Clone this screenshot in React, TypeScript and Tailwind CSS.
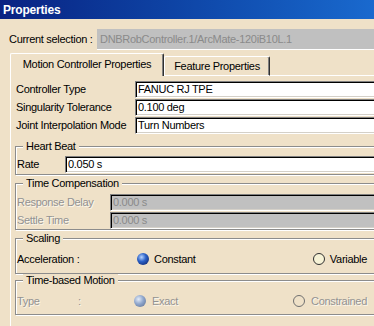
import React from "react";

const BG = "bg-[#efe1c8]";

function Field({ value, disabled }: { value: string; disabled?: boolean }) {
  return (
    <div
      className={`flex-1 h-[17px] flex items-center pl-[2px] whitespace-nowrap overflow-hidden border border-[#808080] border-b-white border-r-white shadow-[inset_1px_1px_0_#000,inset_-1px_-1px_0_#d4d0c8] ${
        disabled ? "bg-[#c0c0c0] text-[#8a8a8a]" : "bg-white text-black"
      }`}
    >
      {value}
    </div>
  );
}

function Group({ title, className, children }: { title: string; className?: string; children: React.ReactNode }) {
  return (
    <div className={`relative ml-[4px] border border-[#8c8c8c] shadow-[inset_1px_1px_0_#fff,1px_1px_0_#fff] ${className ?? ""}`}>
      <span className={`absolute -top-[7px] left-[7px] px-[3px] leading-[13px] ${BG}`}>{title}</span>
      {children}
    </div>
  );
}

function Radio({ checked, disabled }: { checked?: boolean; disabled?: boolean }) {
  if (checked) {
    return (
      <span
        className={`w-[12px] h-[12px] rounded-full shrink-0 ${
          disabled
            ? "bg-[radial-gradient(circle_at_38%_35%,#e4ecf8_0%,#8fa6cc_45%,#5a6c8c_100%)]"
            : "bg-[radial-gradient(circle_at_38%_35%,#b8d4ff_0%,#2c62c8_40%,#08185a_100%)]"
        }`}
      />
    );
  }
  return (
    <span
      className={`w-[12px] h-[12px] rounded-full shrink-0 border ${
        disabled ? "border-[#707070] bg-transparent" : "border-[#303030] bg-[#f6f2d6]"
      }`}
    />
  );
}

const dim = "text-[#929292] [text-shadow:1px_1px_0_#fbf6ec]";

export default function App() {
  return (
    <div className={`w-[374px] h-[326px] overflow-hidden ${BG} font-['Liberation_Sans',Arial,sans-serif] text-[11px] tracking-[-0.3px] text-black`}>
      <div className="w-[382px]">
        {/* title bar */}
        <div className="h-[19px] flex items-center pl-[3px] bg-gradient-to-r from-[#0a2282] to-[#1a6bd0] text-white font-bold text-[12px] tracking-[-0.2px]">
          Properties
        </div>

        {/* current selection */}
        <div className="mt-[10px] flex items-center h-[21px]">
          <span className="pl-[9px] w-[97px] shrink-0">Current selection :</span>
          <div className="flex-1 h-[21px] flex items-center pl-[3px] bg-[#c0c0c0] border-b border-white text-[#8a8a8a] whitespace-nowrap">
            DNBRobController.1/ArcMate-120iB10L.1
          </div>
        </div>

        {/* tabs */}
        <div className="mt-[3px] ml-[10px] flex items-end h-[23px]">
          <div className="w-[154px] h-[23px] flex items-center justify-center pb-[1px] border-l border-t border-white border-r border-r-[#303030] rounded-t-[2px] shadow-[inset_-1px_0_0_#808080]">
            Motion Controller Properties
          </div>
          <div className="w-[106px] h-[20px] flex items-center justify-center border-l border-t border-white border-b border-r border-r-[#303030] rounded-t-[2px] shadow-[inset_-1px_0_0_#808080]">
            Feature Properties
          </div>
          <div className="flex-1 border-b border-white" />
        </div>

        {/* panel */}
        <div className="ml-[10px] border-l border-white pt-[5px] h-[260px]">
          <div className="flex flex-col gap-[1px]">
            <div className="flex items-center pl-[5px]">
              <span className="w-[119px] shrink-0">Controller Type</span>
              <Field value="FANUC RJ TPE" />
            </div>
            <div className="flex items-center pl-[5px]">
              <span className="w-[119px] shrink-0">Singularity Tolerance</span>
              <Field value="0.100 deg" />
            </div>
            <div className="flex items-center pl-[5px]">
              <span className="w-[119px] shrink-0">Joint Interpolation Mode</span>
              <Field value="Turn Numbers" />
            </div>
          </div>

          <Group title="Heart Beat" className="mt-[12px] pt-[9px] pb-[1px]">
            <div className="flex items-center pl-[1px]">
              <span className="w-[48px] shrink-0">Rate</span>
              <Field value="0.050 s" />
            </div>
          </Group>

          <Group title="Time Compensation" className="mt-[8px] pt-[10px]">
            <div className="flex flex-col gap-[1px]">
              <div className="flex items-center pl-[1px]">
                <span className={`w-[93px] shrink-0 ${dim}`}>Response Delay</span>
                <Field value="0.000 s" disabled />
              </div>
              <div className="flex items-center pl-[1px]">
                <span className={`w-[93px] shrink-0 ${dim}`}>Settle Time</span>
                <Field value="0.000 s" disabled />
              </div>
            </div>
          </Group>

          <Group title="Scaling" className="mt-[8px] pt-[8px] pb-[2px]">
            <div className="h-[24px] flex items-center pl-[1px] pr-[14px]">
              <span className="w-[120px] shrink-0">Acceleration :</span>
              <Radio checked />
              <span className="ml-[5px]">Constant</span>
              <span className="ml-auto flex items-center">
                <Radio />
                <span className="ml-[5px]">Variable</span>
              </span>
            </div>
          </Group>

          <Group title="Time-based Motion" className="mt-[6px] pt-[8px] pb-[1px]">
            <div className="h-[24px] flex items-center pl-[1px] pr-[14px]">
              <span className={`w-[61px] shrink-0 ${dim}`}>Type</span>
              <span className={`w-[56px] shrink-0 ${dim}`}>:</span>
              <Radio checked disabled />
              <span className={`ml-[6px] ${dim}`}>Exact</span>
              <span className="ml-auto flex items-center">
                <Radio disabled />
                <span className={`ml-[6px] ${dim}`}>Constrained</span>
              </span>
            </div>
          </Group>
        </div>
      </div>
    </div>
  );
}
